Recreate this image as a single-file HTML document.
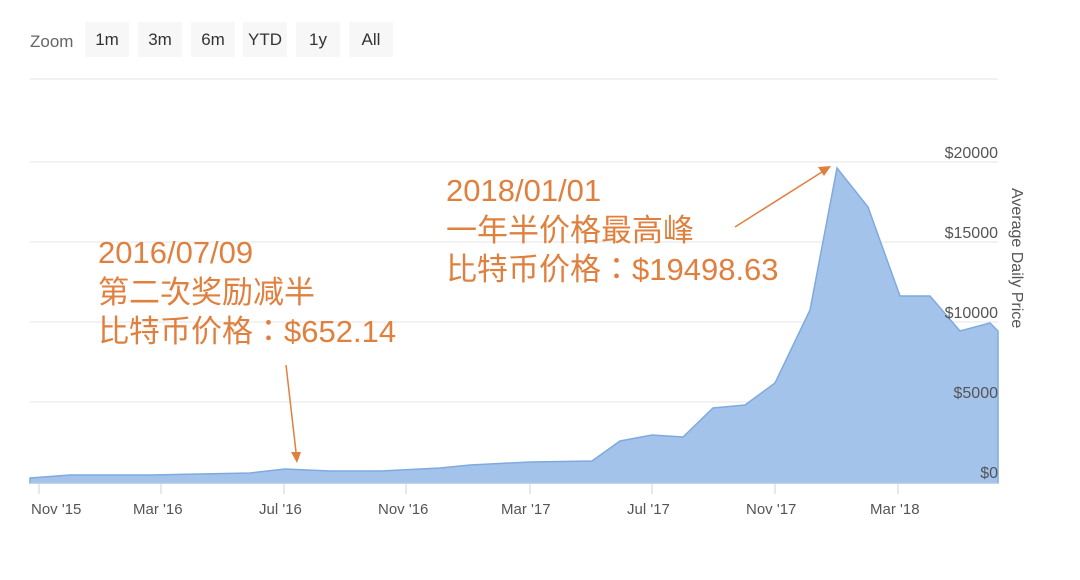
<!DOCTYPE html>
<html><head><meta charset="utf-8"><style>
body{margin:0;width:1080px;height:575px;background:#fff;overflow:hidden;font-family:"Liberation Sans","Noto Sans CJK SC",sans-serif;}
svg text{font-family:"Liberation Sans","Noto Sans CJK SC",sans-serif;}
svg .an{font-family:"Liberation Sans","Noto Sans CJK TC",sans-serif;}
</style></head><body>
<svg width="1080" height="575" xmlns="http://www.w3.org/2000/svg">
<text x="30" y="47" font-size="17" fill="#666">Zoom</text>
<g font-size="17" fill="#333">
<rect x="85" y="22" width="44" height="35" fill="#f7f7f7"/><text x="107" y="45" text-anchor="middle">1m</text>
<rect x="138" y="22" width="44" height="35" fill="#f7f7f7"/><text x="160" y="45" text-anchor="middle">3m</text>
<rect x="191" y="22" width="44" height="35" fill="#f7f7f7"/><text x="213" y="45" text-anchor="middle">6m</text>
<rect x="243" y="22" width="44" height="35" fill="#f7f7f7"/><text x="265" y="45" text-anchor="middle">YTD</text>
<rect x="296" y="22" width="44" height="35" fill="#f7f7f7"/><text x="318" y="45" text-anchor="middle">1y</text>
<rect x="349" y="22" width="44" height="35" fill="#f7f7f7"/><text x="371" y="45" text-anchor="middle">All</text>
</g>
<line x1="30" y1="79" x2="998" y2="79" stroke="#e6e6e6" stroke-width="1"/>
<g stroke="#e6e6e6" stroke-width="1">
<line x1="30" y1="162" x2="998" y2="162"/><line x1="30" y1="242" x2="998" y2="242"/>
<line x1="30" y1="322" x2="998" y2="322"/><line x1="30" y1="402" x2="998" y2="402"/>
</g>
<path d="M30,478 L70,475 L150,475 L250,473 L285,469 L330,471 L380,471 L440,468 L470,465 L530,462 L592,461 L620,441 L652,435 L683,437 L713,408 L745,405 L775,383 L810,310 L837,168 L868,207 L900,296 L930,296 L960,331 L990,323 L998,331 L998,483 L30,483 Z" fill="#a4c3ea" stroke="#7faadf" stroke-width="1.5"/>
<line x1="30" y1="483" x2="998" y2="483" stroke="#c8d5e6"/>
<g stroke="#d0d0d0"><line x1="39" y1="484" x2="39" y2="494"/><line x1="161" y1="484" x2="161" y2="494"/><line x1="284" y1="484" x2="284" y2="494"/><line x1="406" y1="484" x2="406" y2="494"/><line x1="530" y1="484" x2="530" y2="494"/><line x1="652" y1="484" x2="652" y2="494"/><line x1="775" y1="484" x2="775" y2="494"/><line x1="898" y1="484" x2="898" y2="494"/></g>
<g font-size="15" fill="#555">
<text x="31" y="514">Nov '15</text><text x="133" y="514">Mar '16</text><text x="259" y="514">Jul '16</text><text x="378" y="514">Nov '16</text><text x="501" y="514">Mar '17</text><text x="627" y="514">Jul '17</text><text x="746" y="514">Nov '17</text><text x="870" y="514">Mar '18</text>
</g>
<g font-size="16" fill="#555" text-anchor="end">
<text x="998" y="158">$20000</text><text x="998" y="238">$15000</text><text x="998" y="318">$10000</text><text x="998" y="398">$5000</text><text x="998" y="478">$0</text>
</g>
<text transform="translate(1012,188) rotate(90)" font-size="16" fill="#555">Average Daily Price</text>
<g font-size="31" fill="#e0803f" class="an">
<text class="an" x="98" y="263">2016/07/09</text>
<text class="an" x="98" y="303">第二次奖励减半</text>
<text class="an" x="98" y="342">比特币价格：$652.14</text>
<text class="an" x="446" y="201">2018/01/01</text>
<text class="an" x="446" y="241">一年半价格最高峰</text>
<text class="an" x="446" y="280">比特币价格：$19498.63</text>
</g>
<g stroke="#e0803f" stroke-width="1.5" fill="#e0803f">
<line x1="286" y1="365" x2="296" y2="452"/><path d="M291,452 L301,452 L297,463 Z" stroke="none"/>
<line x1="735" y1="227" x2="822" y2="172"/><path d="M818,167 L831,166 L824,176 Z" stroke="none"/>
</g>
</svg>
</body></html>
